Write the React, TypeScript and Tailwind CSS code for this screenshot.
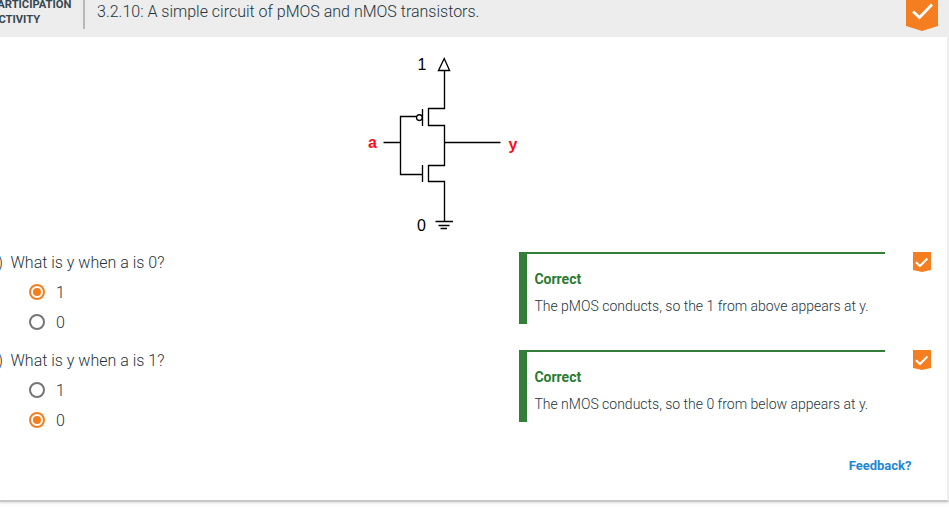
type Question = {
  prompt: string;
  options: string[];
  selected: string;
  explanation: string;
};

const questions: Question[] = [
  {
    prompt: "What is y when a is 0?",
    options: ["1", "0"],
    selected: "1",
    explanation: "The pMOS conducts, so the 1 from above appears at y.",
  },
  {
    prompt: "What is y when a is 1?",
    options: ["1", "0"],
    selected: "0",
    explanation: "The nMOS conducts, so the 0 from below appears at y.",
  },
];

function Circuit() {
  return (
    <svg width="170" height="185" viewBox="360 50 170 185" className="ml-[360px] block shrink-0">
      <g fill="none" stroke="#000" strokeWidth="1.35">
        <path d="M438.5 70.5 L444.2 58.5 L449.6 70.5 Z" />
        <path d="M444.5 71 V108.5 H428.5 V125.5 H444.5 V165.5 H428.5 V181.5 H444.5 V221.5" />
        <path d="M422.5 109 V126 M422.5 165 V182" />
        <path d="M416 116.5 H400.5 V174.5 H422" />
        <circle cx="419.4" cy="117.6" r="2.9" />
        <path d="M383.5 142.5 H400.5 M444.5 142.5 H500.5" />
        <path d="M435.5 221.5 H453 M438.5 225.5 H449.5 M440.5 228.5 H447" />
      </g>
      <g className="font-['Liberation_Sans',Arial,sans-serif] text-[16px]">
        <text x="417.5" y="70">1</text>
        <text x="417" y="231">0</text>
        <text x="368" y="148" fill="#fc0d1b" fontWeight="700">a</text>
        <text x="508.5" y="150" fill="#fc0d1b" fontWeight="700">y</text>
      </g>
    </svg>
  );
}

function Radio({ checked }: { checked: boolean }) {
  return (
    <span
      className={`flex size-4 shrink-0 items-center justify-center rounded-full border-2 ${
        checked ? "border-[#f57f20]" : "border-[#757575]"
      }`}
    >
      {checked && <span className="size-2 rounded-full bg-[#f57f20]" />}
    </span>
  );
}

function SmallBadge() {
  return (
    <svg width="18" height="20" viewBox="0 0 18 20" className="ml-7 shrink-0">
      <path d="M0 0 H18 V18 L9 20 L0 18 Z" fill="#f57f20" />
      <path d="M3 10.3 L6.9 14 L14.4 6.5" fill="none" stroke="#fff" strokeWidth="2" />
    </svg>
  );
}

function QuestionRow({ question }: { question: Question }) {
  return (
    <section className="flex h-[98px] items-start">
      <div className="flex w-[519px] shrink-0 pt-px">
        <span className="-ml-[13px] w-[23.5px] shrink-0 pr-[7.5px] text-right leading-5">1)</span>
        <div>
          <div className="h-[30px] leading-5">{question.prompt}</div>
          {question.options.map((option) => (
            <label key={option} className="ml-[18.5px] flex h-[30px] items-start">
              <span className="mt-px"><Radio checked={option === question.selected} /></span>
              <span className="ml-[11px] leading-5">{option}</span>
            </label>
          ))}
        </div>
      </div>
      <div className="flex h-[72px] w-[366px] shrink-0">
        <div className="w-2 bg-[#337f39]" />
        <div className="flex-1 border-t-2 border-[#337f39] pl-[7.4px] pt-[15px] text-[14px]">
          <div className="leading-5 font-bold text-[#2b7b31]">Correct</div>
          <div className="mt-[7px] whitespace-nowrap leading-5">{question.explanation}</div>
        </div>
      </div>
      <SmallBadge />
    </section>
  );
}

export default function App() {
  return (
    <div className="h-[507px] w-[949px] overflow-hidden bg-[#fdfdfd] font-['Roboto',sans-serif] text-[16px] font-light text-[#24343d]">
      <div className="flex h-[502px] flex-col border-r-2 border-b-2 border-r-[#eeeeee] border-b-[#c8c8c8] bg-white shadow-[0_1px_2px_rgba(0,0,0,0.12)]">
        <header className="-mr-0.5 flex h-[37px] shrink-0 items-start bg-[#ededed]">
          <div className="h-[29px] w-[85px] shrink-0 border-r-2 border-[#b8b8b8] text-[11.2px] font-bold text-[#37474f]">
            <div className="-ml-[9px] -mt-[3px] leading-[15px]">
              PARTICIPATION
              <br />
              ACTIVITY
            </div>
          </div>
          <h1 className="ml-3 mt-0.5 leading-5">3.2.10: A simple circuit of pMOS and nMOS transistors.</h1>
          <svg width="32" height="31" viewBox="0 0 32 31" className="ml-auto mr-[11px]">
            <path d="M0 0 H32 V26 L16 31 L0 26 Z" fill="#f57f20" />
            <path d="M7 11.5 L13.5 17.5 L26 4.5" fill="none" stroke="#fff" strokeWidth="2.8" />
          </svg>
        </header>
        <div className="h-[13px] shrink-0" />
        <Circuit />
        <div className="mt-[17px]">
          {questions.map((q) => (
            <QuestionRow key={q.prompt} question={q} />
          ))}
        </div>
        <a className="ml-auto mr-[35.5px] mt-[8px] text-[13px] font-bold leading-5 text-[#1e88d0]">Feedback?</a>
      </div>
    </div>
  );
}
